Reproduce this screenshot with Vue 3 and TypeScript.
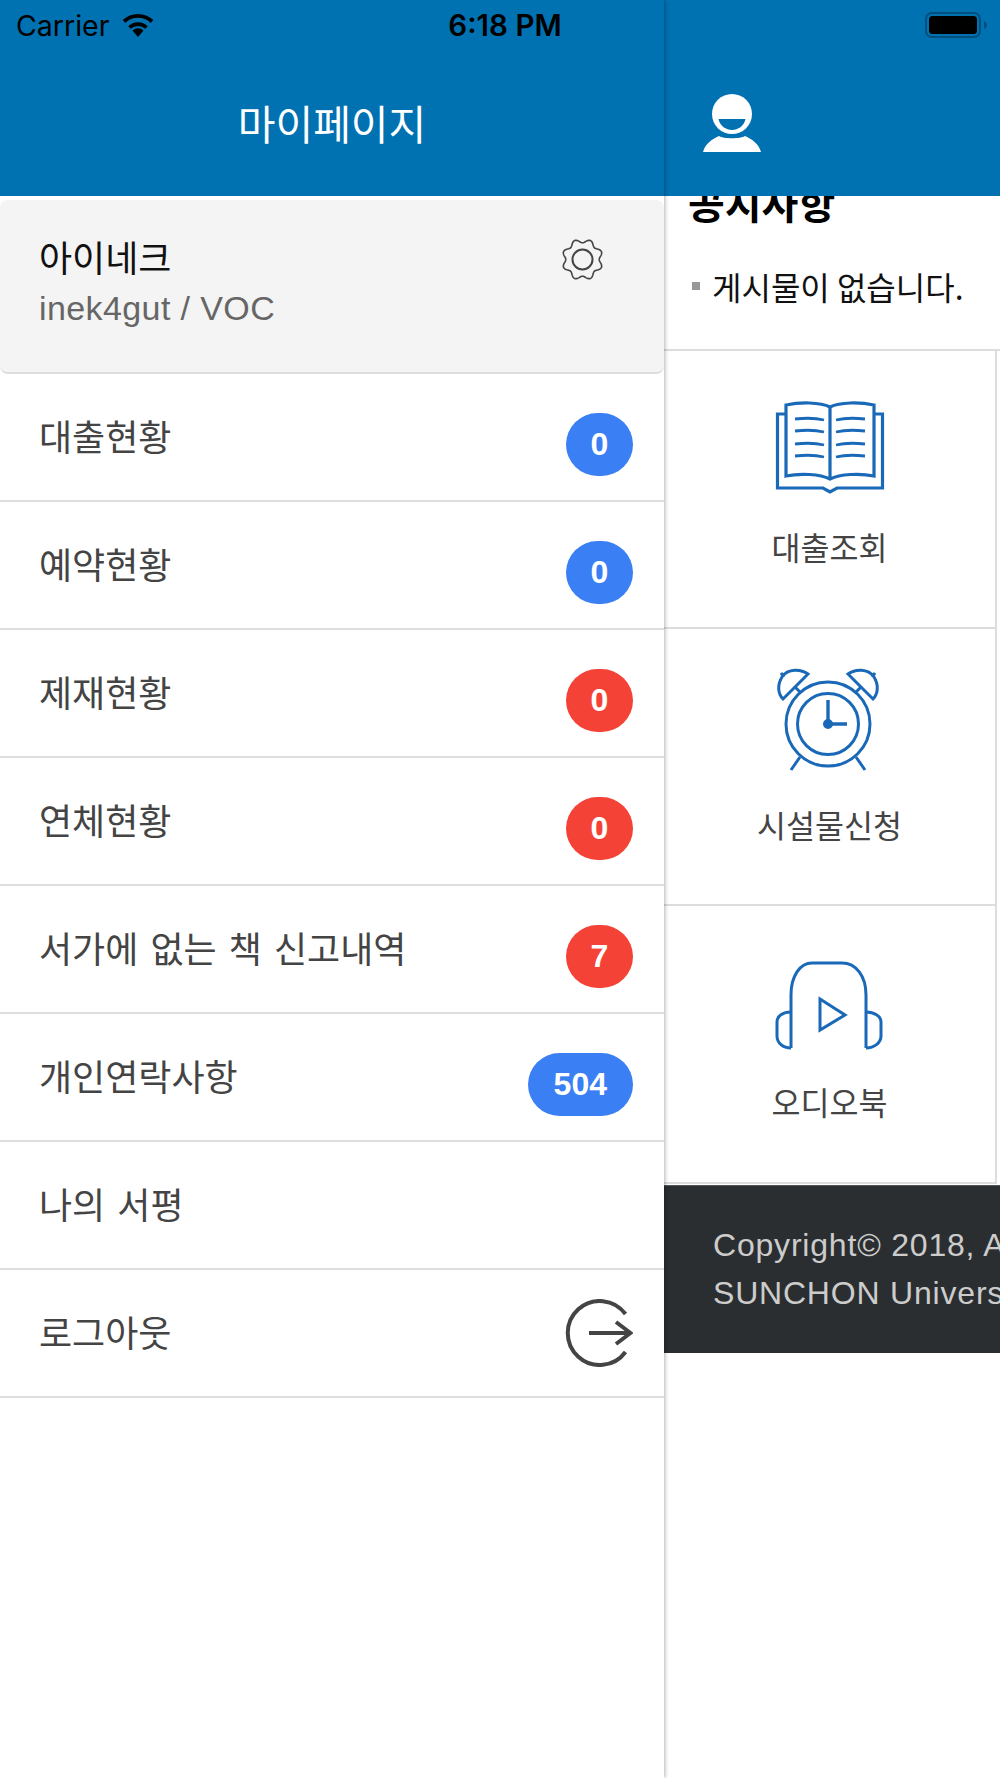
<script setup lang="ts">
import { computed } from 'vue';

interface MenuRow {
  label: string;
  count?: number;
  tone?: 'blue' | 'red';
  logout?: boolean;
}

const rows: MenuRow[] = [
  { label: '대출현황', count: 0, tone: 'blue' },
  { label: '예약현황', count: 0, tone: 'blue' },
  { label: '제재현황', count: 0, tone: 'red' },
  { label: '연체현황', count: 0, tone: 'red' },
  { label: '서가에 없는 책 신고내역', count: 7, tone: 'red' },
  { label: '개인연락사항', count: 504, tone: 'blue' },
  { label: '나의 서평' },
  { label: '로그아웃', logout: true },
];

// eight scalloped teeth, notch at the top
const gearPath = computed(() => {
  const pts: string[] = [];
  for (let i = 0; i < 240; i++) {
    const a = (i / 240) * Math.PI * 2;
    const r = 18.6 + 1.9 * Math.cos(8 * (a - Math.PI / 8));
    pts.push(`${(21.5 + r * Math.cos(a)).toFixed(2)} ${(21.5 + r * Math.sin(a)).toFixed(2)}`);
  }
  return `M${pts.join('L')}Z`;
});
</script>

<template>
  <div class="screen">
    <div class="status">
      <div class="status-left">
        <span>Carrier</span>
        <svg width="34" height="24" viewBox="0 0 34 24">
          <path d="M17 24l-5.500-6.500a8 8 0 0 1 11 0z" fill="#000" />
          <path d="M8.500 14.500a12.500 12.500 0 0 1 17 0" fill="none" stroke="#000" stroke-width="3.600" />
          <path d="M3 8.500a20.500 20.500 0 0 1 28 0" fill="none" stroke="#000" stroke-width="3.800" />
        </svg>
      </div>
      <span class="time">6:18 PM</span>
      <div class="status-right">
        <svg width="62" height="26" viewBox="0 0 62 26">
          <rect x="1" y="1" width="54" height="24" rx="6" fill="none" stroke="#00507e" stroke-width="2" />
          <rect x="4" y="4" width="48" height="18" rx="3.500" fill="#000" />
          <path d="M59 9c2 1 3 2.500 3 4s-1 3-3 4z" fill="#00507e" />
        </svg>
      </div>
    </div>

    <aside class="drawer">
      <header class="drawer-head">마이페이지</header>
      <div class="profile">
        <div>
          <div class="name">아이네크</div>
          <div class="sub">inek4gut / VOC</div>
        </div>
        <svg class="gear" width="43" height="43" viewBox="0 0 43 43" fill="none" stroke="#444" stroke-width="1.600">
          <path :d="gearPath" />
          <circle cx="21.500" cy="21.500" r="10" stroke-width="2" />
        </svg>
      </div>
      <div v-for="row in rows" :key="row.label" class="row">
        <span class="label">{{ row.label }}</span>
        <span
          v-if="row.count !== undefined"
          class="badge"
          :class="[row.tone, { wide: row.count > 99 }]"
        >{{ row.count }}</span>
        <svg v-if="row.logout" width="68" height="68" viewBox="0 0 68 68" fill="none" stroke="#444" stroke-width="4">
          <path d="M60.500 15A32 32 0 1 0 60.500 53" />
          <path d="M24 34H65M51 23L65.500 34L51 45" />
        </svg>
      </div>
    </aside>

    <main class="page">
      <header class="page-head">
        <svg width="58" height="58" viewBox="0 0 58 58">
          <circle cx="29" cy="20" r="20" fill="#fff" />
          <path d="M15.500 25H42.500C41 32 35 36 29 36S17 32 15.500 25Z" fill="#0071b1" />
          <path d="M0 58C2 50 9 45 16 42C20 45 38 45 42 42C49 45 56 50 58 58Z" fill="#fff" />
        </svg>
      </header>

      <section class="notice">
        <h2>공지사항</h2>
        <p><i></i>게시물이 없습니다.</p>
      </section>

      <div class="tile">
        <svg width="110" height="130" viewBox="-1 -21 110 130" fill="none" stroke="#1a69b8" stroke-width="3.200">
          <path d="M10 3C24 0 44 0 54 5C64 0 84 0 98 3V74C84 71 64 72 54 77C44 72 24 71 10 74Z" />
          <path d="M54 5V77" />
          <path d="M10 12H1.500V86H47L54 90L61 86H106.500V12H98" />
          <path d="M19 17C28 16 40 16 48 18M19 29C28 28 40 28 48 30M19 42C28 41 40 41 48 43M19 54C28 53 40 53 48 55" stroke-width="2.800" />
          <path d="M89 17C80 16 68 16 60 18M89 29C80 28 68 28 60 30M89 42C80 41 68 41 60 43M89 54C80 53 68 53 60 55" stroke-width="2.800" />
        </svg>
        <span>대출조회</span>
      </div>
      <div class="tile">
        <svg width="110" height="130" viewBox="-2 -9 110 130" fill="none" stroke="#1a69b8" stroke-width="3">
          <circle cx="51" cy="56" r="42" />
          <circle cx="51" cy="56" r="30.500" />
          <path d="M51 32V56H70" stroke-width="3.400" />
          <circle cx="51" cy="56" r="3.500" fill="#1a69b8" />
          <path d="M31 6C24 1 11 0 5 9C0 17 1 26 6 31ZM4 5L7 9M19 20L23 24" />
          <path d="M71 6C78 1 91 0 97 9C102 17 101 26 96 31ZM98 5L95 9M83 20L79 24" />
          <path d="M23 89L14 102M79 89L88 102" />
        </svg>
        <span>시설물신청</span>
      </div>
      <div class="tile">
        <svg width="110" height="130" viewBox="-1 -26 110 130" fill="none" stroke="#1a69b8" stroke-width="3">
          <path d="M15 86V33C15 14 24 1 36 1H66C80 1 90 14 90 33V86" />
          <path d="M15 50C7 50 1 54 1 60V74C1 81 7 86 15 86" />
          <path d="M90 50C98 50 105 54 105 60V74C105 81 98 86 90 86" />
          <path d="M44 37L69 53L44 68Z" />
        </svg>
        <span>오디오북</span>
      </div>

      <footer class="copy">
        <div>Copyright© 2018, All Rights Reserved.</div>
        <div>SUNCHON University Library</div>
      </footer>
    </main>
  </div>
</template>

<style scoped>
.screen {
  position: relative;
  display: flex;
  width: 1000px;
  height: 1778px;
  overflow: hidden;
  background: #fff;
  font-family: "Noto Sans CJK KR", "Liberation Sans", sans-serif;
}

.status {
  position: absolute;
  top: 0;
  left: 0;
  right: 0;
  z-index: 5;
  display: grid;
  grid-template-columns: 1fr auto 1fr;
  align-items: center;
  height: 50px;
  padding: 0 13px 0 16px;
  color: #000;
  font-family: Inter, "Liberation Sans", sans-serif;
  font-size: 28.5px;
}

.status-left {
  display: flex;
  align-items: center;
  gap: 12px;
}

.status-right {
  display: flex;
  justify-content: flex-end;
}

.time {
  margin-left: 7px;
  font-size: 29.5px;
  font-weight: 600;
}

.drawer {
  position: relative;
  z-index: 2;
  flex: none;
  width: 664px;
  height: 100%;
  box-shadow: 1px 0 4px rgba(0, 0, 0, 0.3);
  background: #fff;
}

.drawer-head {
  display: flex;
  align-items: center;
  justify-content: center;
  height: 196px;
  padding-top: 48px;
  box-sizing: border-box;
  background: #0071b1;
  color: #fff;
  font-size: 41px;
}

.profile {
  display: flex;
  justify-content: space-between;
  align-items: flex-start;
  box-sizing: border-box;
  height: 174px;
  margin-top: 4px;
  padding: 32px 60px 0 39px;
  border-bottom: 2px solid #ddd;
  border-radius: 8px;
  background: #f4f4f4;
}

.name {
  color: #111;
  font-size: 36px;
  line-height: 48px;
}

.sub {
  margin-top: 6px;
  color: #666;
  font-family: "Liberation Sans", sans-serif;
  font-size: 34px;
  letter-spacing: 0.4px;
  line-height: 44px;
}

.gear {
  margin-top: 6px;
}

.row {
  display: flex;
  justify-content: space-between;
  align-items: center;
  box-sizing: border-box;
  height: 128px;
  padding: 0 31px 0 39px;
  border-bottom: 2px solid #ddd;
  color: #444;
  font-size: 36px;
  word-spacing: 4px;
}

.label {
  margin-bottom: 4px;
}

.badge {
  box-sizing: border-box;
  min-width: 67px;
  height: 63px;
  margin-top: 14px;
  border-radius: 32px;
  color: #fff;
  font-family: "Liberation Sans", sans-serif;
  font-size: 32px;
  font-weight: 700;
  line-height: 63px;
  text-align: center;
}

.badge.wide {
  padding: 0 26px;
}

.badge.blue {
  background: #3b7ff5;
}

.badge.red {
  background: #f44336;
}

.page {
  flex: 1;
  min-width: 0;
  height: 100%;
  overflow: hidden;
}

.page-head {
  position: relative;
  z-index: 1;
  display: flex;
  align-items: flex-start;
  height: 196px;
  box-sizing: border-box;
  padding: 94px 0 0 39px;
  background: #0071b1;
}

.notice {
  display: flow-root;
  box-sizing: border-box;
  height: 155px;
  padding-left: 24px;
  border-bottom: 2px solid #ddd;
  white-space: nowrap;
}

.notice h2 {
  margin: -21px 0 0;
  color: #000;
  font-size: 40px;
  font-weight: 700;
  line-height: 54px;
}

.notice p {
  display: flex;
  align-items: center;
  gap: 12px;
  margin: 35px 0 0 4px;
  color: #111;
  font-size: 32px;
  line-height: 44px;
}

.notice i {
  width: 8px;
  height: 8px;
  background: #999;
}

.tile {
  display: flex;
  flex-direction: column;
  align-items: center;
  box-sizing: border-box;
  width: 333px;
  height: 277.5px;
  padding-top: 30px;
  border-right: 2px solid #ddd;
  border-bottom: 2px solid #ddd;
  color: #444;
  font-size: 31.5px;
  line-height: 40px;
}

.tile span {
  margin-top: 15px;
}

.copy {
  box-sizing: border-box;
  height: 168px;
  margin-top: 1.5px;
  padding: 36px 0 0 49px;
  border-top: 1px solid #555;
  background: #2b2e30;
  color: #ccc;
  font-family: "Liberation Sans", sans-serif;
  font-size: 32px;
  letter-spacing: 0.8px;
  line-height: 47.5px;
  white-space: nowrap;
}
</style>

<style>
body {
  margin: 0;
}
</style>
